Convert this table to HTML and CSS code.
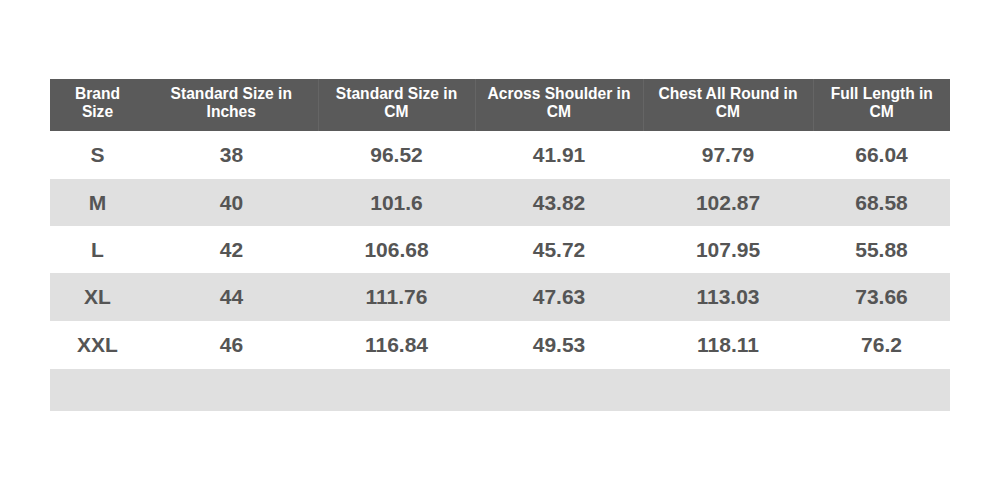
FILE: index.html
```html
<!DOCTYPE html>
<html>
<head>
<meta charset="utf-8">
<link rel="stylesheet" href="styles.css">
</head>
<body>
<div class="page">
<table class="size-table">
  <colgroup>
    <col class="c1"><col class="c2"><col class="c3"><col class="c4"><col class="c5"><col class="c6">
  </colgroup>
  <thead>
    <tr>
      <th>Brand<br>Size</th>
      <th class="nodiv">Standard Size in<br>Inches</th>
      <th>Standard Size in<br>CM</th>
      <th>Across Shoulder in<br>CM</th>
      <th>Chest All Round in<br>CM</th>
      <th>Full Length in<br>CM</th>
    </tr>
  </thead>
  <tbody>
    <tr class="r1"><td>S</td><td>38</td><td>96.52</td><td>41.91</td><td>97.79</td><td>66.04</td></tr>
    <tr class="alt r2"><td>M</td><td>40</td><td>101.6</td><td>43.82</td><td>102.87</td><td>68.58</td></tr>
    <tr class="r3"><td>L</td><td>42</td><td>106.68</td><td>45.72</td><td>107.95</td><td>55.88</td></tr>
    <tr class="alt r4"><td>XL</td><td>44</td><td>111.76</td><td>47.63</td><td>113.03</td><td>73.66</td></tr>
    <tr class="r5"><td>XXL</td><td>46</td><td>116.84</td><td>49.53</td><td>118.11</td><td>76.2</td></tr>
    <tr class="alt empty"><td></td><td></td><td></td><td></td><td></td><td></td></tr>
  </tbody>
</table>
</div>
</body>
</html>
```
FILE: styles.css
```css
html, body {
  margin: 0;
  padding: 0;
  background: #ffffff;
}
.page {
  width: 1000px;
  height: 490px;
  padding: 79px 50px 0 50px;
  box-sizing: border-box;
  font-family: "Liberation Sans", Arial, sans-serif;
}
.size-table {
  width: 900px;
  border-collapse: collapse;
  table-layout: fixed;
}
.c1 { width: 95px; }
.c2 { width: 173px; }
.c3 { width: 157px; }
.c4 { width: 168px; }
.c5 { width: 170px; }
.c6 { width: 137px; }
.size-table th {
  background: #5a5a5a;
  color: #ffffff;
  font-weight: bold;
  font-size: 15.6px;
  line-height: 18px;
  height: 48px;
  padding: 0 0 4px 0;
  text-align: center;
  vertical-align: middle;
  border-left: 1px solid #656565;
}
.size-table th:first-child,
.size-table th.nodiv {
  border-left: none;
}
.size-table td {
  padding: 0;
  text-align: center;
  vertical-align: middle;
  font-weight: bold;
  font-size: 21px;
  color: #555555;
  height: 47px;
}
.size-table .r1 td,
.size-table .r4 td,
.size-table .r5 td {
  height: 48px;
}
.size-table tr.alt td {
  background: #e0e0e0;
}
.size-table tr.empty td {
  height: 42px;
}
```
